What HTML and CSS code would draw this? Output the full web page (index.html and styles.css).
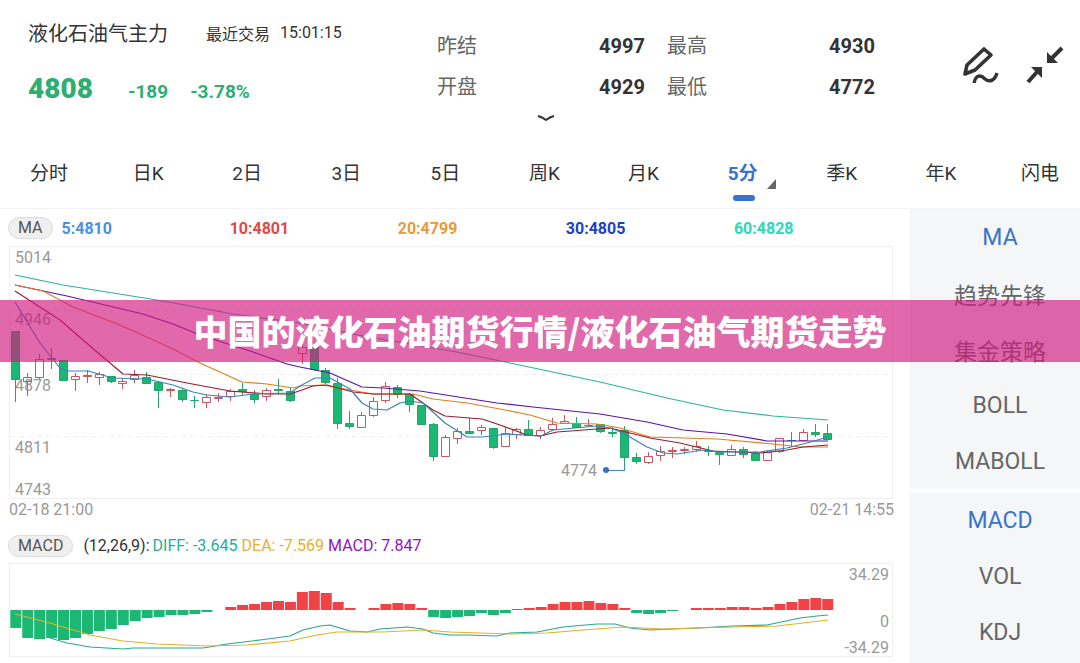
FILE: index.html
```
<!DOCTYPE html>
<html lang="zh-CN">

<head>
  <meta charset="UTF-8" />
  <meta name="viewport" content="width=device-width, initial-scale=1" />
  <title>液化石油气主力</title>
  <link rel="stylesheet" href="styles.css">
</head>
<body>

  <header class="header">
    <div class="quote">
      <div class="quote-title">
        <h1>液化石油气主力</h1>
        <span>最近交易</span>
        <time>15:01:15</time>
      </div>
      <div class="quote-price">
        <strong>4808</strong>
        <span>-189</span>
        <span>-3.78%</span>
      </div>
    </div>
    <dl class="stats">
      <div><dt>昨结</dt><dd>4997</dd></div>
      <div><dt>最高</dt><dd>4930</dd></div>
      <div><dt>开盘</dt><dd>4929</dd></div>
      <div><dt>最低</dt><dd>4772</dd></div>
    </dl>
    <div class="tools">
      <button aria-label="画线">
        <svg width="40" height="40" viewBox="0 0 40 40" fill="none" stroke="#333" stroke-width="4">
          <path d="M5 29 L7 20 L24 4 L31 10 L15 25 Z" stroke-width="3.6" stroke-linejoin="round" />
          <path d="M14 38 C16 29 21 30 25 34 C30 38 35 35 37 28" stroke-width="3.4" />
        </svg>
      </button>
      <button aria-label="退出全屏">
        <svg width="40" height="40" viewBox="0 0 40 40" fill="#333" stroke="#333">
          <path d="M22 7 V18 H33 Z M17 22 V33 L6 22 Z" stroke="none" />
          <path d="M27 13 L37 3 M12 27 L3 37" stroke-width="4" />
        </svg>
      </button>
    </div>
  </header>

  <button class="more" aria-label="展开">
    <svg width="18" height="8" viewBox="0 0 18 8" fill="none" stroke="#333" stroke-width="2">
      <path d="M1 1 Q5 2 9 5 Q13 2 17 1" />
    </svg>
  </button>

  <nav class="tabs">
    <button>分时</button>
    <button>日K</button>
    <button>2日</button>
    <button>3日</button>
    <button>5日</button>
    <button>周K</button>
    <button>月K</button>
    <button class="active">5分</button>
    <button>季K</button>
    <button>年K</button>
    <button>闪电</button>
  </nav>

  <main class="main">
    <section class="charts">
      <div class="legend">
        <button class="pill">MA</button>
        <ul class="averages">
          <li class="ma5">5:4810</li>
          <li class="ma10">10:4801</li>
          <li class="ma20">20:4799</li>
          <li class="ma30">30:4805</li>
          <li class="ma60">60:4828</li>
        </ul>
      </div>

      <svg class="chart" id="price" viewBox="0 0 884 253">
        <rect class="frame" x="0.5" y="0.5" width="883" height="252" />
        <path class="grid" d="M1 64.5 H883 M1 128.5 H883 M1 190.5 H883" />
        <g class="axis">
          <text x="6" y="17">5014</text>
          <text x="6" y="79">4946</text>
          <text x="6" y="145">4878</text>
          <text x="6" y="207">4811</text>
          <text x="6" y="249">4743</text>
          <text x="552" y="230">4774</text>
        </g>
        <g id="candles"></g>
        <g id="averages"></g>
        <path class="marker" d="M597 224.5 H616" />
        <circle class="marker-dot" cx="597" cy="224" r="3" />
      </svg>
      <div class="dates">
        <time>02-18 21:00</time>
        <time>02-21 14:55</time>
      </div>

      <div class="legend legend-macd">
        <button class="pill">MACD</button>
        <span class="params">(12,26,9):</span>
        <span class="diff">DIFF: -3.645</span>
        <span class="dea">DEA: -7.569</span>
        <span class="macd">MACD: 7.847</span>
      </div>

      <svg class="chart" id="macd" viewBox="0 0 884 94">
        <rect class="frame" x="0.5" y="0.5" width="883" height="93" />
        <g id="bars"></g>
        <g id="signals"></g>
        <g class="axis" text-anchor="end">
          <text x="880" y="17">34.29</text>
          <text x="880" y="64">0</text>
          <text x="880" y="90">-34.29</text>
        </g>
      </svg>
    </section>

    <aside class="indicators">
      <div class="group">
        <button class="active">MA</button>
        <button>趋势先锋</button>
        <button>集金策略</button>
        <button>BOLL</button>
        <button>MABOLL</button>
      </div>
      <div class="group">
        <button class="active">MACD</button>
        <button>VOL</button>
        <button>KDJ</button>
      </div>
    </aside>
  </main>

  <div class="banner">中国的液化石油期货行情/液化石油气期货走势</div>

  <script src="chart.js"></script>
</body>
</html>
```
FILE: styles.css
```
* {
  box-sizing: border-box;
}
body {
  margin: 0;
  min-height: 100vh;
  display: flex;
  flex-direction: column;
  font-family: Roboto, "Noto Sans CJK SC", sans-serif;
  font-size: 16px;
  color: #333;
  background-color: #fff;
}
button {
  padding: 0;
  border: 0;
  background: none;
  font: inherit;
  color: inherit;
  cursor: pointer;
}

/* header */
.header {
  display: flex;
  height: 108px;
  padding: 0 15px 0 28px;
}
.quote {
  flex: 0 0 409px;
}
.quote-title {
  display: flex;
  align-items: center;
  height: 65px;
}
.quote-title h1 {
  margin: 0 38px 0 0;
  font-size: 20px;
  font-weight: 400;
}
.quote-title time {
  margin-left: 10px;
}
.quote-price {
  display: flex;
  align-items: baseline;
  font-size: 19px;
  font-weight: 700;
  line-height: 48px;
  color: #2eae74;
}
.quote-price strong {
  margin-right: 35px;
  font-size: 28px;
}
.quote-price span {
  margin-right: 22px;
}
.stats {
  flex: 1;
  display: grid;
  grid-template-columns: 1fr 1fr;
  grid-auto-rows: 41px;
  column-gap: 22px;
  margin: 0;
  padding-top: 26px;
  font-size: 20px;
  line-height: 41px;
}
.stats div {
  display: flex;
  justify-content: space-between;
}
.stats dt {
  color: #666;
}
.stats dd {
  margin: 0;
  font-weight: 700;
}
.tools {
  display: flex;
  gap: 25px;
  align-items: center;
  margin-left: 85px;
  padding-top: 22px;
}
.tools svg {
  display: block;
}
.more {
  height: 22px;
  padding-left: 11px;
}
.more svg {
  display: block;
  margin: 0 auto;
}

/* period tabs */
.tabs {
  display: flex;
  justify-content: space-between;
  height: 79px;
  padding: 4px 11px 0 20px;
  border-bottom: 1px solid #f3f4f6;
  font-size: 19px;
}
.tabs button {
  position: relative;
  width: 58px;
}
.tabs .active {
  color: #3a73cc;
  font-weight: 700;
}
.tabs .active::before {
  content: "";
  position: absolute;
  left: 19px;
  bottom: 7px;
  width: 22px;
  height: 6px;
  border-radius: 3px;
  background-color: #3a73cc;
}
.tabs .active::after {
  content: "";
  position: absolute;
  right: -4px;
  bottom: 19px;
  border-left: 9px solid transparent;
  border-bottom: 10px solid #666;
}

/* charts */
.main {
  flex: 1;
  display: flex;
}
.charts {
  flex: 1;
  min-width: 0;
  padding: 0 17px 0 9px;
}
.legend {
  display: flex;
  align-items: center;
  height: 37px;
}
.pill {
  height: 22px;
  margin-left: -1px;
  padding: 0 9px;
  border: 1px solid #ddd;
  border-radius: 11px;
  background-color: #efefef;
  line-height: 20px;
  color: #555;
}
.averages {
  flex: 1;
  display: grid;
  grid-template-columns: repeat(5, 1fr);
  margin: 0 -9px 0 9px;
  padding: 2px 0 0;
  list-style: none;
  font-weight: 700;
}
.ma5 { color: #4a8fe0; }
.ma10 { color: #e04848; }
.ma20 { color: #e89a3a; }
.ma30 { color: #1a42c0; }
.ma60 { color: #2ad8b8; }

.chart {
  display: block;
  width: 100%;
}
.frame {
  fill: none;
  stroke: #efefef;
}
.grid {
  stroke: #efefef;
  stroke-dasharray: 5 4;
}
.axis {
  font-size: 16px;
  fill: #999;
}
.up {
  fill: none;
  stroke: #cc5560;
}
.down {
  fill: #1bb874;
  stroke: #22a56c;
}
.line {
  fill: none;
  stroke-width: 1.2;
  stroke-linejoin: round;
}
.line-ma5 { stroke: #3585b8; }
.line-ma10 { stroke: #9c1d2a; }
.line-ma20 { stroke: #e07f1e; }
.line-ma30 { stroke: #5a14a8; }
.line-ma60 { stroke: #2fb39c; }
.line-diff { stroke: #2aa893; }
.line-dea { stroke: #e2b02a; }
.bar-up { fill: #ef4347; }
.bar-down { fill: #1bb874; }
.marker {
  stroke: #4a7fc0;
}
.marker-dot {
  fill: #3a6fc8;
}
.dates {
  display: flex;
  justify-content: space-between;
  margin-right: -1px;
  line-height: 22px;
  color: #999;
}
.legend-macd {
  height: 35px;
  margin-top: 7px;
}
.params {
  margin: 0 3px 0 10px;
}
.diff { margin-right: 4px; color: #1fae98; }
.dea { margin-right: 4px; color: #e8b02c; }
.macd { color: #9410cc; }

/* indicator list */
.indicators {
  flex: 0 0 170px;
  display: flex;
  flex-direction: column;
  gap: 3px;
}
.group {
  display: flex;
  flex-direction: column;
  background-color: #f4f6f8;
}
.group:last-child {
  flex: 1;
}
.group button {
  height: 56px;
  padding: 1px 0 0 10px;
  font-size: 23px;
  color: #666;
}
.group .active {
  color: #3a73cc;
}

/* headline over the page */
.banner {
  position: absolute;
  top: 300px;
  left: 0;
  right: 0;
  height: 62px;
  background-color: rgba(208, 26, 128, 0.66);
  color: #fff;
  font-family: "Noto Sans CJK SC", sans-serif;
  font-size: 34px;
  font-weight: 900;
  line-height: 62px;
  text-align: center;
  pointer-events: none;
}
```
FILE: chart.js
```
const NS = 'http://www.w3.org/2000/svg';
const STEP = 11.94;
const FIRST = 6.5;
const ZERO = 47;

// direction, high, body top, body bottom, low
const candles = [
  ['d', 85, 85, 133, 156], ['u', 127, 131, 135, 150], ['u', 108, 113, 131, 133],
  ['d', 102, 112, 113, 123], ['d', 114, 114, 134, 134], ['u', 127, 130, 133, 145],
  ['u', 124, 129, 130, 137], ['u', 126, 128, 131, 139], ['d', 130, 130, 135, 137],
  ['u', 132, 135, 137, 143], ['u', 124, 129, 133, 137], ['d', 126, 131, 137, 138],
  ['d', 136, 136, 144, 162], ['u', 142, 143, 144, 151], ['d', 142, 144, 153, 156],
  ['d', 150, 154, 154, 162], ['u', 148, 151, 156, 162], ['u', 147, 151, 152, 156],
  ['u', 143, 145, 150, 155], ['d', 137, 143, 145, 149], ['d', 144, 148, 153, 157],
  ['u', 142, 144, 150, 155], ['d', 133, 143, 144, 148], ['d', 142, 145, 154, 156],
  ['u', 98, 101, 107, 118], ['d', 96, 98, 123, 125], ['d', 122, 124, 136, 138],
  ['d', 132, 137, 177, 183], ['d', 165, 177, 180, 183], ['u', 166, 169, 181, 181],
  ['u', 151, 155, 169, 171], ['u', 136, 140, 154, 157], ['d', 139, 141, 148, 152],
  ['d', 147, 148, 158, 166], ['d', 159, 159, 178, 178], ['d', 177, 178, 210, 215],
  ['u', 189, 191, 210, 210], ['u', 182, 185, 192, 198], ['d', 172, 185, 187, 187],
  ['u', 179, 181, 184, 189], ['d', 182, 182, 201, 203], ['u', 181, 187, 200, 201],
  ['u', 182, 183, 188, 193], ['d', 174, 183, 189, 190], ['u', 181, 184, 189, 193],
  ['u', 172, 178, 183, 183], ['u', 169, 175, 177, 178], ['d', 171, 177, 181, 182],
  ['u', 173, 179, 179, 181], ['d', 178, 178, 185, 187], ['d', 181, 186, 187, 191],
  ['d', 180, 184, 211, 224], ['d', 207, 211, 215, 218], ['u', 206, 210, 216, 218],
  ['u', 200, 205, 209, 215], ['u', 201, 204, 205, 212], ['u', 201, 203, 204, 208],
  ['u', 195, 200, 203, 206], ['d', 200, 204, 205, 210], ['d', 205, 206, 208, 219],
  ['u', 199, 203, 209, 209], ['d', 201, 203, 208, 212], ['d', 205, 207, 214, 214],
  ['u', 205, 206, 214, 214], ['u', 192, 192, 205, 207], ['d', 186, 194, 194, 201],
  ['u', 183, 186, 194, 194], ['d', 178, 186, 188, 191], ['d', 178, 187, 193, 193]
];

const averages = {
  ma60: '6,29 54,39 154,55 224,68 291,77 354,90 448,106 501,117 591,136 658,152 714,164 764,170 819,174',
  ma30: '6,39 58,50 134,68 164,78 191,89 244,106 278,118 291,121 321,127 353,141 374,142 411,145 488,157 524,161 591,168 638,176 674,184 718,188 758,195 819,195',
  ma20: '6,39 34,45 64,61 111,79 164,103 191,117 233,136 258,138 284,142 291,140 314,139 341,144 364,148 404,148 424,153 458,157 491,163 521,169 548,177 588,178 611,182 641,191 708,193 764,198 791,201 819,201',
  ma10: '6,45 51,74 88,106 114,128 138,129 178,137 221,145 258,148 281,148 293,144 304,140 318,139 344,146 364,148 401,148 424,164 436,170 473,173 491,179 518,189 531,190 548,186 588,183 601,182 641,192 671,197 704,205 751,207 778,204 794,201 819,199',
  ma5: '6,56 31,97 51,122 58,125 79,125 104,132 138,133 164,139 184,146 198,149 221,151 244,148 281,147 291,140 306,132 321,132 341,143 353,157 364,163 378,164 391,157 401,155 414,157 436,177 458,191 474,191 498,188 532,190 544,184 588,180 601,182 614,187 638,201 654,207 668,208 694,204 714,206 751,206 778,202 798,197 819,191'
};

const bars = [
  -18, -28, -29, -28, -30, -28, -24, -21, -19, -15, -11, -8, -7, -5, -5, -4, -2, 0,
  3, 5, 6, 8, 9, 8, 18, 19, 17, 8, 2, 0, 2, 6, 7, 6, 2,
  -7, -8, -7, -6, -3, -5, -3, 1, 2, 3, 6, 8, 8, 9, 7, 6, 2,
  -3, -4, -3, -1, 0, 2, 2, 2, 3, 3, 2, 3, 6, 8, 11, 12, 11
];

const signals = {
  diff: '41,75 58,80 81,84 114,86 124,85 194,85 218,81 251,77 281,73 294,67 311,63 321,62 341,68 358,69 371,66 398,64 414,66 424,70 441,72 458,72 488,73 501,70 528,69 554,64 588,61 606,61 621,65 641,67 688,65 724,63 758,62 791,55 808,53 819,52',
  dea: '6,51 41,60 81,72 114,78 148,81 198,83 238,82 281,78 308,72 328,69 374,69 414,67 441,69 501,71 538,70 574,67 614,64 654,66 724,64 768,63 794,60 819,57'
};

function add(parent, name, attrs) {
  const el = document.createElementNS(NS, name);
  for (const key in attrs) {
    el.setAttribute(key, attrs[key]);
  }
  document.getElementById(parent).appendChild(el);
}

function drawLines(parent, lines) {
  for (const name in lines) {
    add(parent, 'polyline', { class: 'line line-' + name, points: lines[name] });
  }
}

candles.forEach(([dir, high, top, bottom, low], i) => {
  const x = Math.round(FIRST + i * STEP - 0.5) + 0.5;
  add('candles', 'path', {
    class: dir === 'u' ? 'up' : 'down',
    d: `M${x} ${high} V${top} M${x} ${bottom} V${low} M${x - 4} ${top + 0.5} H${x + 4} V${bottom + 0.5} H${x - 4} Z`
  });
});

bars.forEach((value, i) => {
  if (value === 0) return;
  add('bars', 'rect', {
    class: value > 0 ? 'bar-up' : 'bar-down',
    x: FIRST + i * STEP - 5.2,
    y: value > 0 ? ZERO - value : ZERO,
    width: 11,
    height: Math.abs(value)
  });
});

drawLines('averages', averages);
drawLines('signals', signals);
```
